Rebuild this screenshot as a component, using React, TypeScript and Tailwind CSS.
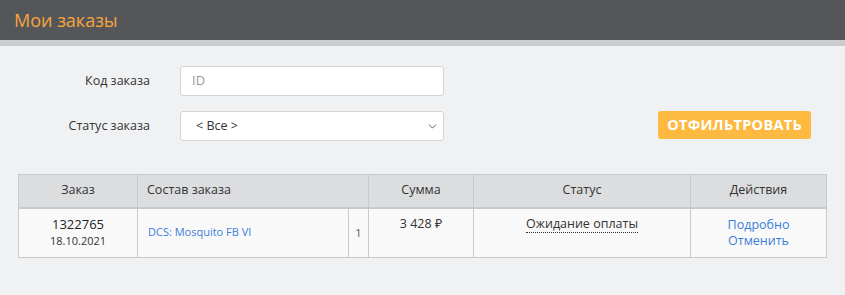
import React from 'react';
import { ChevronDown } from 'lucide-react';

const font = { fontFamily: '"Open Sans", "Noto Sans", sans-serif' };

export default function App() {
  return (
    <div className="w-[845px] h-[295px] bg-[#f0f1f3] text-[#333] overflow-hidden" style={font}>
      {/* Title bar */}
      <header className="h-[40px] bg-[#55565a] flex items-center px-[14px]">
        <h1 className="text-[18px] font-normal text-[#f7a43c] leading-none">Мои заказы</h1>
      </header>
      <div className="h-[6px] bg-[#cbccce]" />

      {/* Filter form */}
      <div className="flex items-start pt-[20px] pr-[34px]">
        <div className="flex flex-col gap-[15px]">
          <div className="flex items-center h-[30px]">
            <label className="w-[150px] text-right text-[12.5px] text-[#333]">Код заказа</label>
            <div className="ml-[30px] w-[264px] h-[30px] bg-white border border-[#d4d4d4] rounded-[3px] flex items-center px-[11px] text-[13px] text-[#999]">
              ID
            </div>
          </div>
          <div className="flex items-center h-[30px]">
            <label className="w-[150px] text-right text-[12.5px] text-[#333]">Статус заказа</label>
            <div className="ml-[30px] w-[264px] h-[30px] bg-white border border-[#d4d4d4] rounded-[3px] flex items-center justify-between pl-[15px] pr-[4px] text-[12.5px] text-[#333]">
              <span>&lt; Все &gt;</span>
              <ChevronDown className="w-[13px] h-[13px] text-[#555]" strokeWidth={1.75} />
            </div>
          </div>
        </div>
        <div className="flex-1 flex justify-end pt-[45px]">
          <button className="h-[28px] px-[9px] bg-[#fdb940] rounded-[3px] text-white font-bold text-[14.5px] tracking-[0.3px]">
            ОТФИЛЬТРОВАТЬ
          </button>
        </div>
      </div>

      {/* Orders table */}
      <div className="px-[18px] pt-[33px]">
        <table className="w-[808px] border-collapse text-[12.5px] table-fixed">
          <colgroup>
            <col className="w-[119px]" />
            <col className="w-[211px]" />
            <col className="w-[20px]" />
            <col className="w-[105px]" />
            <col className="w-[217px]" />
            <col className="w-[136px]" />
          </colgroup>
          <thead>
            <tr className="bg-[#dcdddf] h-[33px] border-b-2 border-[#c8c9cb]">
              <th className="border border-[#c8c9cb] font-normal text-center">Заказ</th>
              <th colSpan={2} className="border border-[#c8c9cb] font-normal text-left pl-[9px]">Состав заказа</th>
              <th className="border border-[#c8c9cb] font-normal text-center">Сумма</th>
              <th className="border border-[#c8c9cb] font-normal text-center">Статус</th>
              <th className="border border-[#c8c9cb] font-normal text-center">Действия</th>
            </tr>
          </thead>
          <tbody>
            <tr className="bg-[#f9f9f9] h-[50px]">
              <td className="border border-[#c8c9cb] text-center align-top pt-[6px]">
                <div className="font-medium text-[13px] leading-[18px] text-[#222]">1322765</div>
                <div className="text-[11px] leading-[16px]">18.10.2021</div>
              </td>
              <td className="border border-[#c8c9cb] pl-[10px] align-middle">
                <a className="text-[#3b7fd9] text-[11px]">DCS: Mosquito FB VI</a>
              </td>
              <td className="border border-[#c8c9cb] text-center text-[11px] text-[#555] align-middle">1</td>
              <td className="border border-[#c8c9cb] text-center align-top pt-[6px] leading-[18px]">3 428 ₽</td>
              <td className="border border-[#c8c9cb] text-center align-top pt-[6px] leading-[18px]">
                <span className="border-b border-dotted border-[#333]">Ожидание оплаты</span>
              </td>
              <td className="border border-[#c8c9cb] text-center align-top pt-[8px] leading-[16px]">
                <div className="text-[#3b7fd9]">Подробно</div>
                <div className="text-[#3b7fd9]">Отменить</div>
              </td>
            </tr>
          </tbody>
        </table>
      </div>
    </div>
  );
}
